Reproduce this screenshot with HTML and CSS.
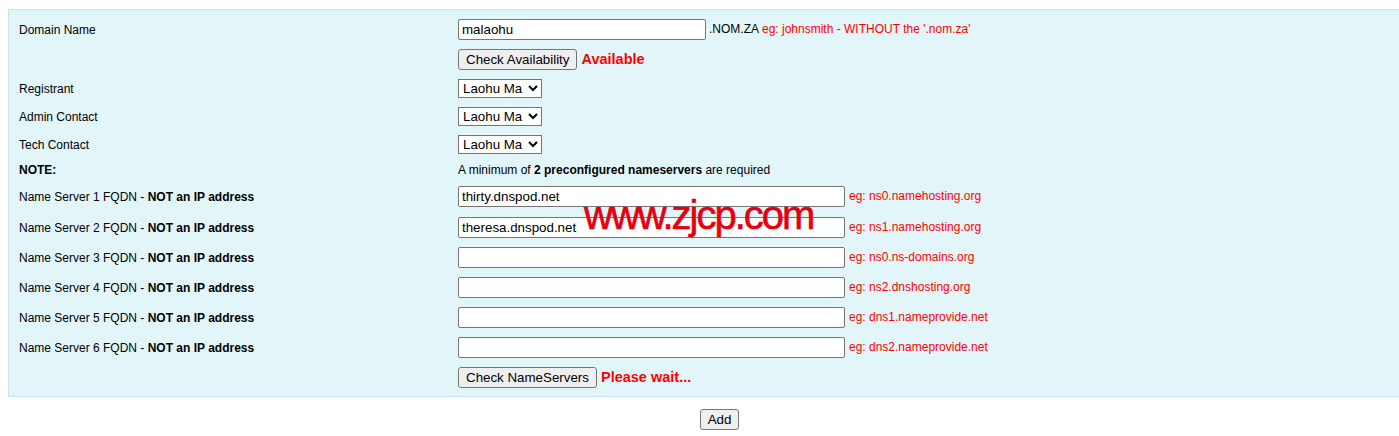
FILE: index.html
```html
<!DOCTYPE html>
<html>
<head>
<meta charset="utf-8">
<link rel="stylesheet" href="styles.css">
</head>
<body>
<form class="form">
  <div class="box">
    <div class="row r30">
      <div class="label">Domain Name</div>
      <div class="field"><input class="domain" type="text" value="malaohu"><span class="suffix">.NOM.ZA</span><span class="eg eg-inline">eg: johnsmith - WITHOUT the '.nom.za'</span></div>
    </div>
    <div class="row r30">
      <div class="label"></div>
      <div class="field"><button type="button">Check Availability</button><span class="status">Available</span></div>
    </div>
    <div class="row r28">
      <div class="label">Registrant</div>
      <div class="field"><select><option>Laohu Ma</option></select></div>
    </div>
    <div class="row r28">
      <div class="label">Admin Contact</div>
      <div class="field"><select><option>Laohu Ma</option></select></div>
    </div>
    <div class="row r28">
      <div class="label">Tech Contact</div>
      <div class="field"><select><option>Laohu Ma</option></select></div>
    </div>
    <div class="row r22">
      <div class="label"><b>NOTE:</b></div>
      <div class="field note">A minimum of&nbsp;<b>2 preconfigured nameservers</b>&nbsp;are required</div>
    </div>
    <div class="row r32">
      <div class="label">Name Server 1 FQDN - <b>NOT an IP address</b></div>
      <div class="field"><input class="ns" type="text" value="thirty.dnspod.net"><span class="eg">eg: ns0.namehosting.org</span></div>
    </div>
    <div class="row r30 wm-host">
      <div class="label">Name Server 2 FQDN - <b>NOT an IP address</b></div>
      <div class="field"><input class="ns" type="text" value="theresa.dnspod.net"><span class="eg">eg: ns1.namehosting.org</span></div>
      <div class="watermark">www.zjcp.com</div>
    </div>
    <div class="row r30">
      <div class="label">Name Server 3 FQDN - <b>NOT an IP address</b></div>
      <div class="field"><input class="ns" type="text" value=""><span class="eg">eg: ns0.ns-domains.org</span></div>
    </div>
    <div class="row r30">
      <div class="label">Name Server 4 FQDN - <b>NOT an IP address</b></div>
      <div class="field"><input class="ns" type="text" value=""><span class="eg">eg: ns2.dnshosting.org</span></div>
    </div>
    <div class="row r30">
      <div class="label">Name Server 5 FQDN - <b>NOT an IP address</b></div>
      <div class="field"><input class="ns" type="text" value=""><span class="eg">eg: dns1.nameprovide.net</span></div>
    </div>
    <div class="row r30">
      <div class="label">Name Server 6 FQDN - <b>NOT an IP address</b></div>
      <div class="field"><input class="ns" type="text" value=""><span class="eg">eg: dns2.nameprovide.net</span></div>
    </div>
    <div class="row r30">
      <div class="label"></div>
      <div class="field"><button type="button">Check NameServers</button><span class="status">Please wait...</span></div>
    </div>
  </div>
  <div class="actions"><button type="button">Add</button></div>
</form>
</body>
</html>
```

FILE: styles.css
```css
html, body {
  background: #fff;
}
body {
  margin: 9px 0 0 8px;
  font-family: "Liberation Sans", Arial, sans-serif;
  font-size: 12px;
  color: #000;
}
.box {
  background: #e2f6fa;
  border: 1px solid #c9e2f3;
  border-top-color: #cbe4ef;
  border-bottom-color: #c4e0fa;
  border-right: none;
  padding: 4px 0 4px 10px;
}
.row {
  display: grid;
  grid-template-columns: 439px 1fr;
  align-items: center;
}
.r30 { height: 30px; }
.r28 { height: 28px; }
.r22 { height: 22px; }
.r32 { height: 32px; }
.label {
  padding-top: 2px;
}
.field {
  display: flex;
  align-items: center;
  white-space: nowrap;
}
.note {
  padding-top: 2px;
}
input {
  font-family: "Liberation Sans", Arial, sans-serif;
  font-size: 13.33px;
  height: 21px;
  box-sizing: border-box;
  border: 1px solid #767676;
  border-radius: 2px;
  padding: 1px 3px;
  margin: 0;
  background: #fff;
  color: #000;
}
.domain { width: 248px; }
.ns { width: 387px; }
.suffix { margin-left: 3px; }
.eg {
  color: #f00;
  margin-left: 4px;
}
.eg-inline { margin-left: 3px; }
button {
  font-family: "Liberation Sans", Arial, sans-serif;
  font-size: 13.33px;
  height: 21px;
  box-sizing: border-box;
  border: 1px solid #767676;
  border-radius: 3px;
  background: #efefef;
  color: #000;
  padding: 1px 7px;
  margin: 0;
}
.status {
  color: #f00;
  font-weight: bold;
  font-size: 14.5px;
  margin-left: 4px;
}
select {
  font-family: "Liberation Sans", Arial, sans-serif;
  font-size: 13.33px;
  width: 84px;
  height: 19px;
  box-sizing: border-box;
  border: 1px solid #767676;
  border-radius: 0;
  background: #fff;
  color: #000;
  margin: 0;
}
.wm-host { position: relative; }
.watermark {
  position: absolute;
  left: 565px;
  top: -19px;
  font-family: "Liberation Sans", Arial, sans-serif;
  font-size: 40px;
  letter-spacing: -2px;
  color: #e4000f;
  -webkit-text-stroke: 0.6px #e4000f;
  white-space: nowrap;
  pointer-events: none;
}
.actions {
  display: flex;
  justify-content: center;
  padding-left: 32px;
  margin-top: 12px;
}
```
